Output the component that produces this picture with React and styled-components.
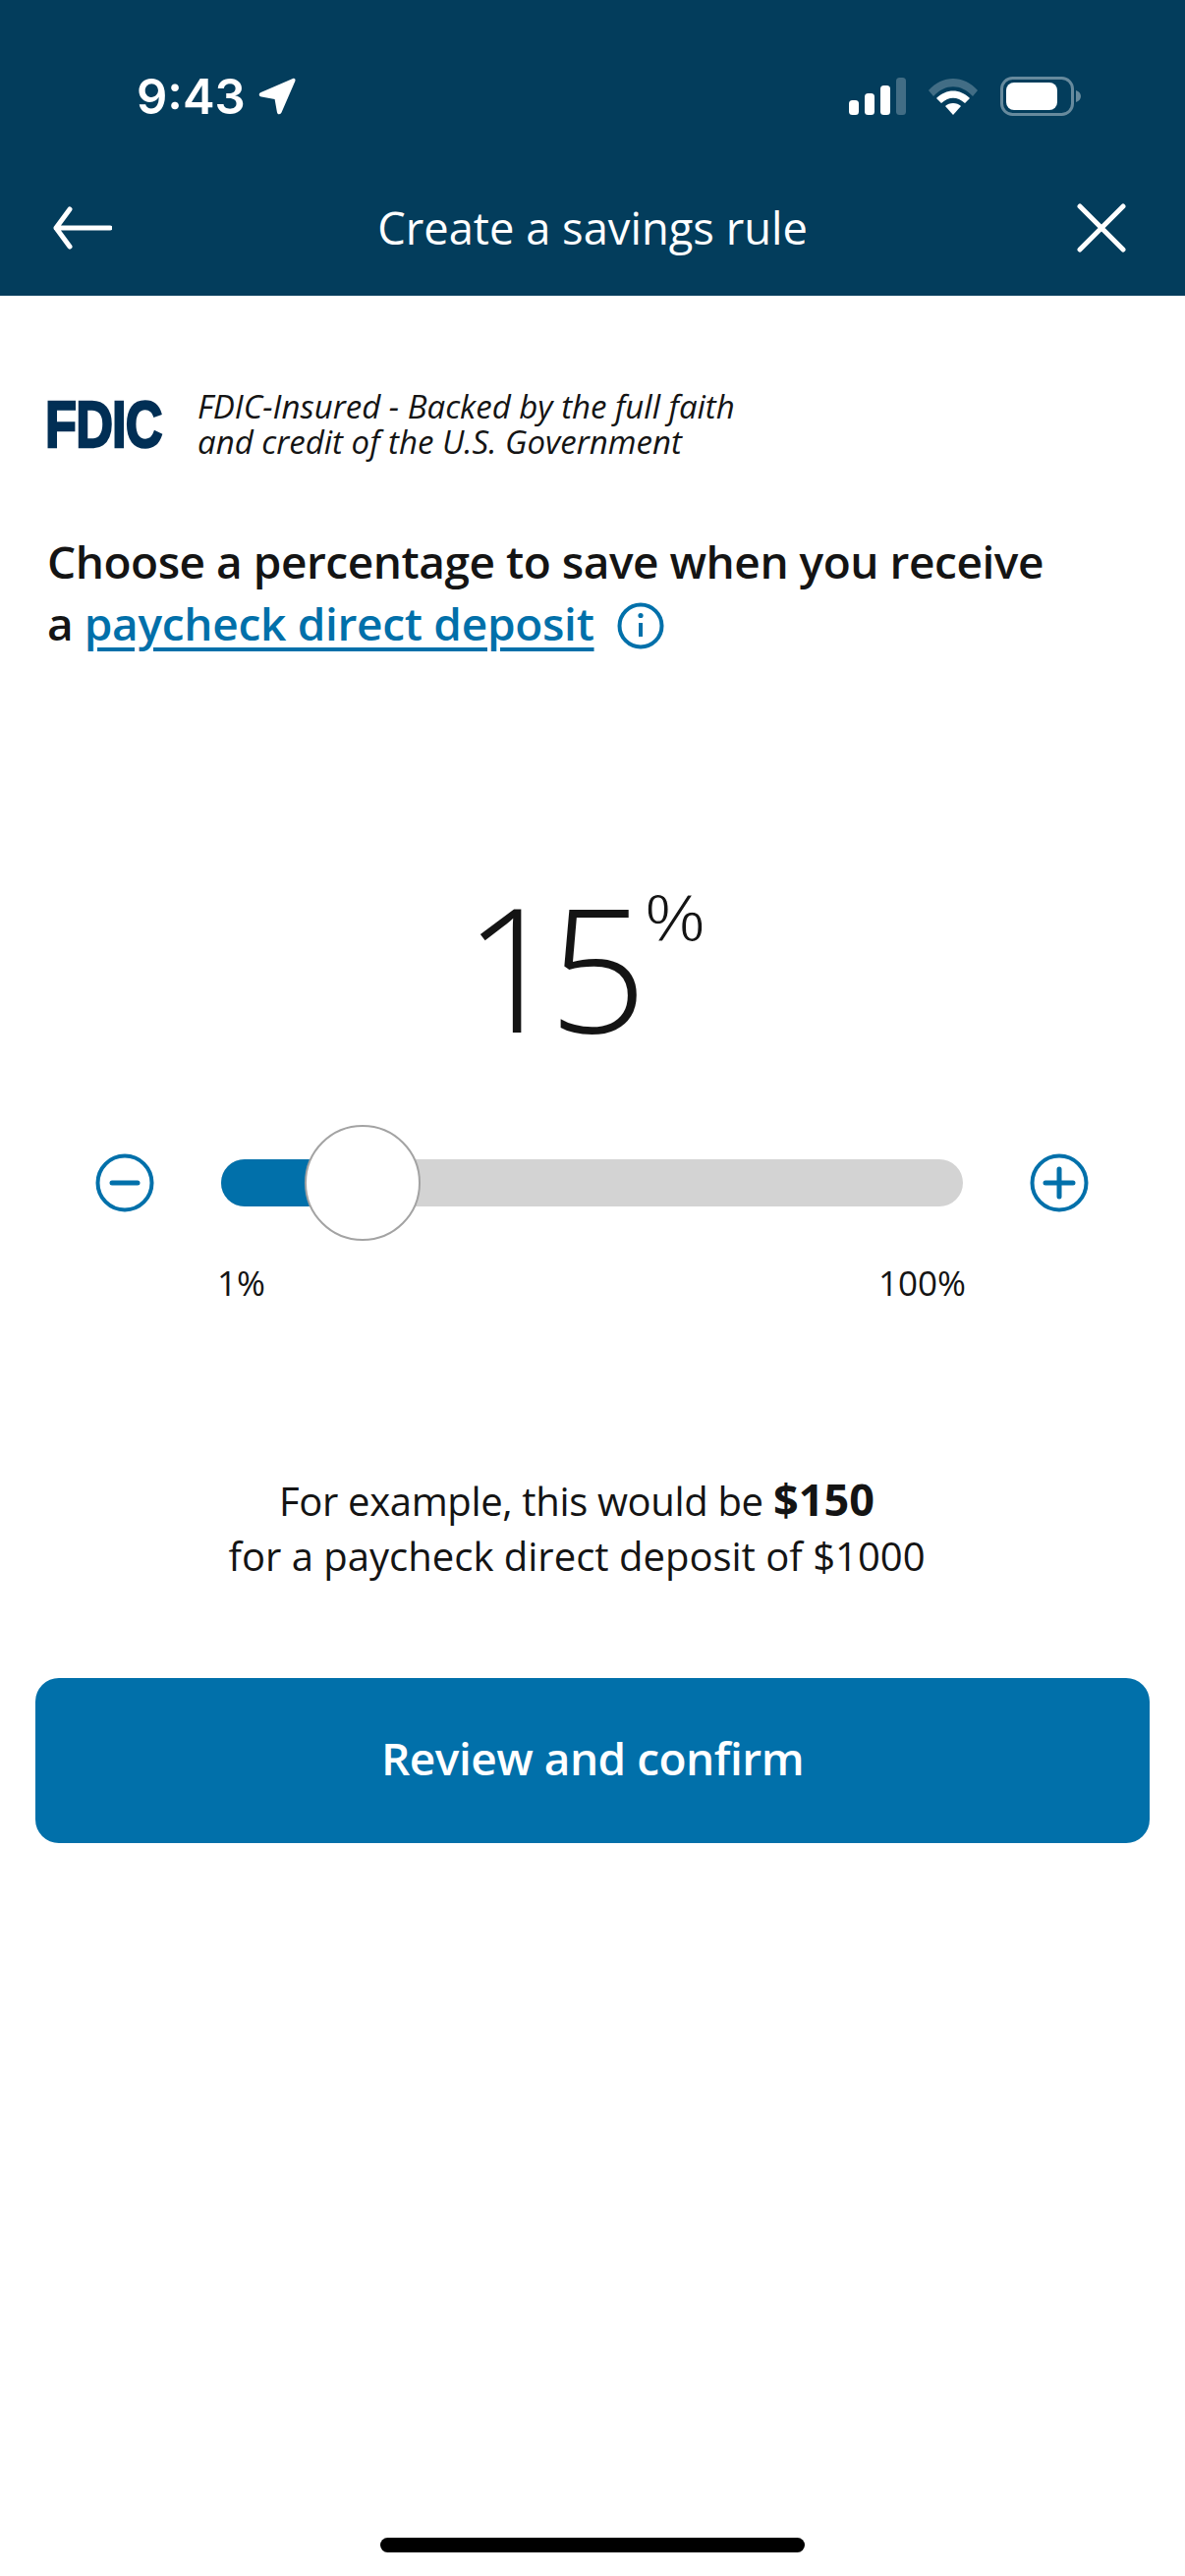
import React from 'react'
import styled, { createGlobalStyle } from 'styled-components'

const GlobalStyle = createGlobalStyle`
  html, body {
    margin: 0;
    padding: 0;
    background: #fff;
  }
  * {
    box-sizing: border-box;
  }
`

const Page = styled.div`
  width: 1206px;
  height: 2622px;
  background: #fff;
  display: flex;
  flex-direction: column;
  font-family: "Open Sans", "Noto Sans", sans-serif;
  color: #141414;
  overflow: hidden;
`

const Header = styled.header`
  height: 301px;
  background: #033d5c;
  padding-top: 60px;
  flex-shrink: 0;
`

const StatusBar = styled.div`
  height: 76px;
  padding: 0 106px 0 139px;
  display: flex;
  align-items: center;
  justify-content: space-between;
`

const StatusLeft = styled.div`
  display: flex;
  align-items: center;
  gap: 13px;
`

const Time = styled.span`
  font-family: Inter, "Liberation Sans", sans-serif;
  font-size: 49px;
  font-weight: 600;
  line-height: 1;
  color: #fff;
`

const StatusRight = styled.div`
  display: flex;
  align-items: center;
  gap: 22px;
`

const NavBar = styled.nav`
  height: 96px;
  margin-top: 48px;
  padding: 0 60px;
  display: grid;
  grid-template-columns: 1fr auto 1fr;
  align-items: center;
`

const NavTitle = styled.h1`
  margin: 0;
  font-size: 45.3px;
  font-weight: 400;
  line-height: 1;
  color: #fff;
`

const BackIcon = styled.svg`
  display: block;
  margin-left: -6px;
`

const CloseIcon = styled.svg`
  display: block;
  justify-self: end;
`

const FdicRow = styled.div`
  margin-top: 95px;
  padding-left: 48px;
  display: flex;
  align-items: center;
  gap: 36px;
`

const FdicLogo = styled.div`
  width: 117px;
  height: 48px;
  margin-left: -2px;
  margin-right: 2px;
  font-family: "Liberation Sans", sans-serif;
  font-size: 67px;
  font-weight: 700;
  line-height: 48px;
  letter-spacing: -1px;
  color: #012f55;
  white-space: nowrap;
  transform: scaleX(0.78);
  transform-origin: left center;
  -webkit-text-stroke: 2.5px #012f55;
`

const FdicText = styled.p`
  margin: 0;
  font-size: 33px;
  font-style: italic;
  font-weight: 400;
  line-height: 36px;
  color: #141414;
`

const Prompt = styled.h2`
  margin: 72px 0 0;
  padding: 0 48px;
  font-size: 46px;
  font-weight: 600;
  line-height: 63px;
  letter-spacing: -0.47px;
  color: #141414;
`

const PromptLink = styled.a`
  color: #0170aa;
  letter-spacing: -0.3px;
  text-decoration: underline;
  text-decoration-thickness: 4px;
  text-underline-offset: 7px;
`

const InfoIcon = styled.svg`
  display: inline-block;
  vertical-align: -9px;
  margin-left: 23px;
`

const ValueRow = styled.div`
  margin-top: 232px;
  padding-right: 17px;
  display: flex;
  justify-content: center;
  align-items: flex-start;
  gap: 12px;
`

const ValueNumber = styled.span`
  font-size: 176px;
  font-weight: 300;
  line-height: 170px;
  letter-spacing: -14px;
  color: #141414;
`

const ValueUnit = styled.span`
  padding-top: 1px;
  font-family: "Liberation Sans", sans-serif;
  font-size: 68px;
  font-weight: 400;
  line-height: 70px;
  color: #141414;
  -webkit-text-stroke: 1.2px #fff;
`

const SliderRow = styled.div`
  margin-top: 106px;
  padding-left: 97px;
  display: flex;
  align-items: center;
  gap: 68px;
`

const Track = styled.div`
  position: relative;
  width: 755px;
  height: 48px;
  border-radius: 24px;
  background: #d3d3d3;
`

const TrackFill = styled.div`
  width: ${(p) => p.$width}px;
  height: 100%;
  border-radius: 24px 0 0 24px;
  background: #0170aa;
`

const Thumb = styled.div`
  position: absolute;
  top: 50%;
  left: ${(p) => p.$center}px;
  width: 118px;
  height: 118px;
  transform: translate(-50%, -50%);
  border-radius: 50%;
  border: 2.5px solid #a3a3a3;
  background: #fff;
`

const StepIcon = styled.svg`
  display: block;
  flex-shrink: 0;
`

const RangeLabels = styled.div`
  margin-top: 52px;
  padding: 0 223px 0 221px;
  display: flex;
  justify-content: space-between;
  font-size: 35px;
  line-height: 40px;
  color: #141414;
`

const Example = styled.p`
  margin: 174px 0 0;
  padding-right: 32px;
  font-size: 40px;
  line-height: 56px;
  text-align: center;
  color: #141414;
`

const ExampleLead = styled.span`
  letter-spacing: -0.35px;
`

const ExampleAmount = styled.strong`
  font-size: 45px;
  font-weight: 700;
  line-height: 0;
`

const ConfirmButton = styled.button`
  display: block;
  width: 1134px;
  height: 168px;
  margin: 96px 0 0 36px;
  padding: 0 0 6px;
  border: 0;
  border-radius: 24px;
  background: #0170aa;
  color: #fff;
  font-family: inherit;
  font-size: 46px;
  font-weight: 600;
  letter-spacing: -0.5px;
`

const HomeArea = styled.div`
  margin-top: auto;
  padding-bottom: 24px;
  display: flex;
  justify-content: center;
`

const HomeBar = styled.div`
  width: 432px;
  height: 15px;
  border-radius: 8px;
  background: #000;
`

const SignalIcon = () => (
  <svg width="58" height="38" viewBox="0 0 58 38">
    <rect x="0" y="23" width="10" height="15" rx="3.5" fill="#fff" />
    <rect x="16" y="16" width="10" height="22" rx="3.5" fill="#fff" />
    <rect x="32" y="8" width="10" height="30" rx="3.5" fill="#fff" />
    <rect x="48" y="0" width="10" height="38" rx="3.5" fill="#fff" opacity="0.25" />
  </svg>
)

const WifiIcon = () => (
  <svg width="52" height="38" viewBox="0 0 52 38">
    <path d="M1 13 C15 -3 37 -3 51 13 L46 19 C34 6 18 6 6 19 Z" fill="#fff" opacity="0.25" />
    <path d="M9 21 C19 11 33 11 43 21 L38 26 C30 19 22 19 14 26 Z" fill="#fff" />
    <path d="M18 29 C22 25 30 25 34 29 L26 38 Z" fill="#fff" />
  </svg>
)

const BatteryIcon = () => (
  <svg width="82" height="40" viewBox="0 0 82 40">
    <rect x="1.5" y="1.5" width="72" height="37" rx="11" fill="none" stroke="#fff" strokeOpacity="0.4" strokeWidth="3" />
    <rect x="6" y="6" width="52" height="28" rx="8" fill="#fff" />
    <path d="M77 14 C80 15 82 17 82 20 C82 23 80 25 77 26 Z" fill="#fff" opacity="0.4" />
  </svg>
)

const LocationIcon = () => (
  <svg width="38" height="38" viewBox="0 0 38 38">
    <path
      d="M35 1 C37 0.4 38 1.6 37.4 3.4 L23.5 35.6 C22.4 38 19.6 37.8 19 35.4 L16.6 22 L3 19.6 C0.2 19 0 16 2.6 15 Z"
      fill="#fff"
    />
  </svg>
)

export default function App() {
  const sliderCenter = 144

  return (
    <Page>
      <GlobalStyle />
      <Header>
        <StatusBar>
          <StatusLeft>
            <Time>9:43</Time>
            <LocationIcon />
          </StatusLeft>
          <StatusRight>
            <SignalIcon />
            <WifiIcon />
            <BatteryIcon />
          </StatusRight>
        </StatusBar>
        <NavBar>
          <BackIcon width="60" height="44" viewBox="0 0 60 44" fill="none" stroke="#fff" strokeWidth="5" strokeLinecap="round" strokeLinejoin="round">
            <path d="M58 22 H3 M17 3 L3 22 L17 41" />
          </BackIcon>
          <NavTitle>Create a savings rule</NavTitle>
          <CloseIcon width="50" height="50" viewBox="0 0 50 50" fill="none" stroke="#fff" strokeWidth="5" strokeLinecap="round">
            <path d="M3 3 L47 47 M47 3 L3 47" />
          </CloseIcon>
        </NavBar>
      </Header>

      <FdicRow>
        <FdicLogo>FDIC</FdicLogo>
        <FdicText>
          FDIC-Insured - Backed by the full faith
          <br />
          and credit of the U.S. Government
        </FdicText>
      </FdicRow>

      <Prompt>
        Choose a percentage to save when you receive
        <br />
        a <PromptLink>paycheck direct deposit</PromptLink>
        <InfoIcon width="48" height="48" viewBox="0 0 48 48" fill="none" stroke="#0170aa" strokeWidth="4">
          <circle cx="24" cy="24" r="21.5" />
          <path d="M24 21 V35" />
          <circle cx="24" cy="13.5" r="2.6" fill="#0170aa" stroke="none" />
        </InfoIcon>
      </Prompt>

      <ValueRow>
        <ValueNumber>15</ValueNumber>
        <ValueUnit>%</ValueUnit>
      </ValueRow>

      <SliderRow>
        <StepIcon width="60" height="60" viewBox="0 0 60 60" fill="none" stroke="#0170aa" strokeWidth="4">
          <circle cx="30" cy="30" r="27.5" />
          <path d="M17 30 H43" strokeWidth="5" strokeLinecap="round" />
        </StepIcon>
        <Track>
          <TrackFill $width={sliderCenter} />
          <Thumb $center={sliderCenter} />
        </Track>
        <StepIcon width="60" height="60" viewBox="0 0 60 60" fill="none" stroke="#0170aa" strokeWidth="4">
          <circle cx="30" cy="30" r="27.5" />
          <path d="M16 30 H44 M30 16 V44" strokeWidth="5" strokeLinecap="round" />
        </StepIcon>
      </SliderRow>

      <RangeLabels>
        <span>1%</span>
        <span>100%</span>
      </RangeLabels>

      <Example>
        <ExampleLead>For example, this would be</ExampleLead> <ExampleAmount>$150</ExampleAmount>
        <br />
        for a paycheck direct deposit of $1000
      </Example>

      <ConfirmButton>Review and confirm</ConfirmButton>

      <HomeArea>
        <HomeBar />
      </HomeArea>
    </Page>
  )
}
